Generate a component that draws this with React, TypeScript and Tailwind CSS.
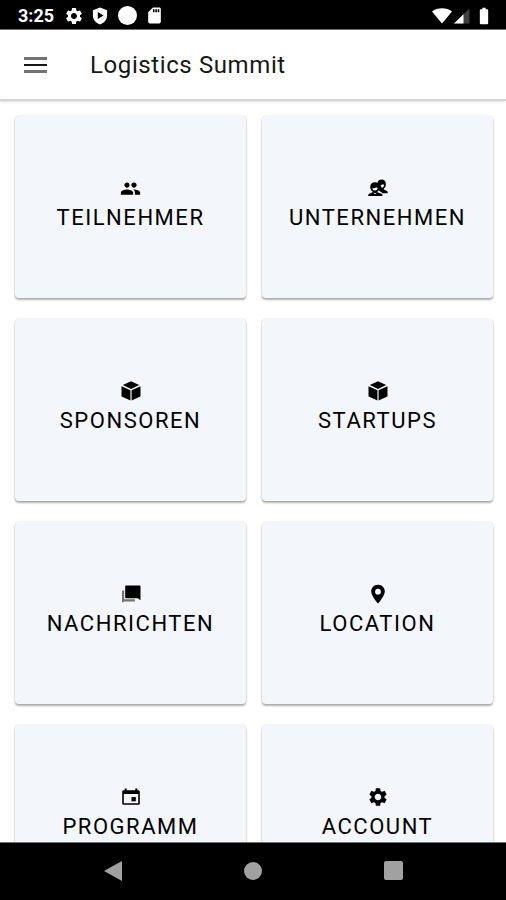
import React from 'react';
import { MdBatteryFull, MdPeople, MdSdCard, MdSettings } from 'react-icons/md';

function MenuIcon() {
  return (
    <svg viewBox="0 0 24 18" className="h-[18px] w-6" aria-hidden="true">
      <path d="M1 1h23v3H1zM1 14h23v3H1z" className="fill-neutral-500" />
      <path d="M1 8h23v2H1z" className="fill-neutral-900" />
    </svg>
  );
}

function ContactsIcon() {
  return (
    <svg viewBox="0 0 20 20" className="size-5" fill="currentColor" aria-hidden="true">
      <path d="M9.500 5C9.900 2.500 11.400 1.400 13.600 1.400s4.200 1.400 4.200 3.800v1.900c0 1.500-.8 2.700-2 3.400v.9l3.100 1.600c.5.300.8.800.8 1.400v.9h-5.500c-.5-1-1.500-1.600-3-2.200z" />
      <path d="M12.500 7c1.100 0 2-.3 2.600-.8.3.4.7.6 1.100.7 0 1.500-1 2.600-2.200 2.600h-.7c0-1-.2-1.900-.8-2.500z" className="fill-slate-100" />
      <path d="M2.300 8.600C2.300 5.800 4 4.200 7 4.200s4.700 1.600 4.700 4.400v1.200c0 1.500-.8 2.900-2.200 3.600v.8l4 1.500c.7.300 1 .9 1 1.600v.8H.2v-.8c0-.7.3-1.300 1-1.600l3.400-1.500v-.8C3.200 12.700 2.300 11.300 2.300 9.800z" />
      <path d="M4.400 10.200c1.900 0 3.100-.4 3.900-1 .3.400.8.700 1.400.8 0 1.500-1.200 2.500-2.700 2.500s-2.600-1-2.600-2.300z" className="fill-slate-100" />
      <path d="M5.400 14.400 7 15.300l1.600-.9-.8 1.600H6.200z" className="fill-slate-300" />
    </svg>
  );
}

function BoxIcon() {
  return (
    <svg viewBox="0 0 20 20" className="size-5" fill="currentColor" aria-hidden="true">
      <path d="M10 .3 18.200 4 10 8 1.800 4z" />
      <path d="M.5 5.200 9.400 9.300v10.200L1.200 15.800a1.200 1.200 0 0 1-.7-1.100z" />
      <path d="M19.500 5.200 10.600 9.300v10.200l8.200-3.700c.4-.2.700-.6.700-1.100z" />
    </svg>
  );
}

function MessagesIcon() {
  return (
    <svg viewBox="0 0 20 20" className="size-5" fill="currentColor" aria-hidden="true">
      <path d="M5 1.500h13.700c.5 0 .8.300.8.800v13.900l-2.700-2H5c-.5 0-.8-.3-.8-.8V2.300c0-.5.300-.8.800-.8z" />
      <path d="M1.300 6.500h1.900v8.700h10.700v2.300H3.400L1 18.600V7.700z" className="fill-neutral-500" />
    </svg>
  );
}

function PinIcon() {
  return (
    <svg viewBox="0 0 20 20" className="size-5" fill="currentColor" aria-hidden="true">
      <path
        d="M10 .8c-3.900 0-6.800 2.900-6.800 6.600 0 4.600 6.800 12 6.800 12s6.800-7.400 6.800-12C16.800 3.700 13.900.8 10 .8zm0 4a2.900 2.900 0 1 1 0 5.800 2.900 2.900 0 0 1 0-5.800z"
        fillRule="evenodd"
      />
    </svg>
  );
}

function CalendarIcon() {
  return (
    <svg viewBox="0 0 20 20" className="size-5" fill="currentColor" aria-hidden="true">
      <path d="M3.700 1.500h2v1.700h8.600V1.500h2v1.700h.9c.9 0 1.600.7 1.600 1.600v11.400c0 .9-.7 1.600-1.600 1.600H2.800c-.9 0-1.600-.7-1.600-1.600V4.800c0-.9.700-1.600 1.600-1.600h.9zM2.800 7v9.200h14.400V7z" />
      <path d="M10.500 10h4.300v4.300h-4.300z" />
    </svg>
  );
}

const tiles = [
  { label: 'Teilnehmer', icon: <MdPeople className="size-[21px]" /> },
  { label: 'Unternehmen', icon: <ContactsIcon /> },
  { label: 'Sponsoren', icon: <BoxIcon /> },
  { label: 'Startups', icon: <BoxIcon /> },
  { label: 'Nachrichten', icon: <MessagesIcon /> },
  { label: 'Location', icon: <PinIcon /> },
  { label: 'Programm', icon: <CalendarIcon /> },
  { label: 'Account', icon: <MdSettings className="size-[22px]" /> },
];

function StatusBar() {
  return (
    <div className="flex h-[30px] shrink-0 items-center justify-between border-b border-neutral-500 bg-black pt-0.5 pr-3 pl-[18px] text-white">
      <div className="flex items-center">
        <span className="w-[46px] text-lg leading-5 font-bold">3:25</span>
        <MdSettings className="mr-2 size-5" />
        <svg viewBox="0 0 18 20" className="mr-2.5 h-[18px] w-4" fill="currentColor" aria-hidden="true">
          <path d="M9 .5 17 3.500v6c0 4.700-3.300 8.700-8 10-4.700-1.300-8-5.300-8-10v-6zM6.500 5.500v8l6.500-4z" fillRule="evenodd" />
        </svg>
        <span className="mr-2 size-[19px] rounded-full bg-white" />
        <MdSdCard className="size-[19px]" />
      </div>
      <div className="flex items-center">
        <svg viewBox="0 0 20 16" className="h-4 w-5" fill="currentColor" aria-hidden="true">
          <path d="M10 15.500 0 3.500C2.800 1.300 6.200.2 10 .2s7.200 1.100 10 3.300z" />
        </svg>
        <svg viewBox="0 0 16 16" className="mr-1 ml-0.5 size-4" fill="currentColor" aria-hidden="true">
          <path d="M15.500.5v15H0z" className="fill-neutral-700" />
          <path d="M9.500 6.300v9.200H0z" />
        </svg>
        <MdBatteryFull className="size-5" />
      </div>
    </div>
  );
}

function NavigationBar() {
  return (
    <nav className="flex h-[58px] shrink-0 items-center justify-around border-t border-neutral-500 bg-black px-[42px] pb-0.5 text-neutral-400">
      <button type="button" aria-label="Back">
        <svg viewBox="0 0 20 22" className="h-[22px] w-5" fill="currentColor" aria-hidden="true">
          <path d="M19 1v20L1 11z" />
        </svg>
      </button>
      <button type="button" aria-label="Home" className="size-[18px] rounded-full bg-neutral-400" />
      <button type="button" aria-label="Overview" className="size-[19px] rounded-xs bg-neutral-400" />
    </nav>
  );
}

function App() {
  return (
    <div className="flex h-screen flex-col bg-white font-[Roboto,sans-serif] text-black">
      <StatusBar />
      <header className="z-10 flex h-[71px] shrink-0 items-center border-b-2 border-neutral-300 bg-white pl-[23px] shadow-sm">
        <button type="button" aria-label="Menu">
          <MenuIcon />
        </button>
        <h1 className="ml-[43px] text-2xl tracking-wide text-neutral-900">Logistics Summit</h1>
      </header>
      <main className="min-h-0 flex-1 overflow-y-auto pt-[15px] pr-[13px] pl-[15px] [scrollbar-width:none]">
        <div className="grid grid-cols-2 gap-x-4 gap-y-[21px] pb-4">
          {tiles.map((tile) => (
            <button
              key={tile.label}
              type="button"
              className="flex h-[182px] flex-col items-center justify-center rounded-sm bg-[#f3f6fa] pb-1 text-[22px] leading-7 tracking-[0.07em] uppercase shadow-[0_2px_2px_rgba(0,0,0,0.3),0_0_2px_rgba(0,0,0,0.15)]"
            >
              <span className="flex h-5 items-center">{tile.icon}</span>
              <span className="mt-1.5">{tile.label}</span>
            </button>
          ))}
        </div>
      </main>
      <NavigationBar />
    </div>
  );
}

export default App;
